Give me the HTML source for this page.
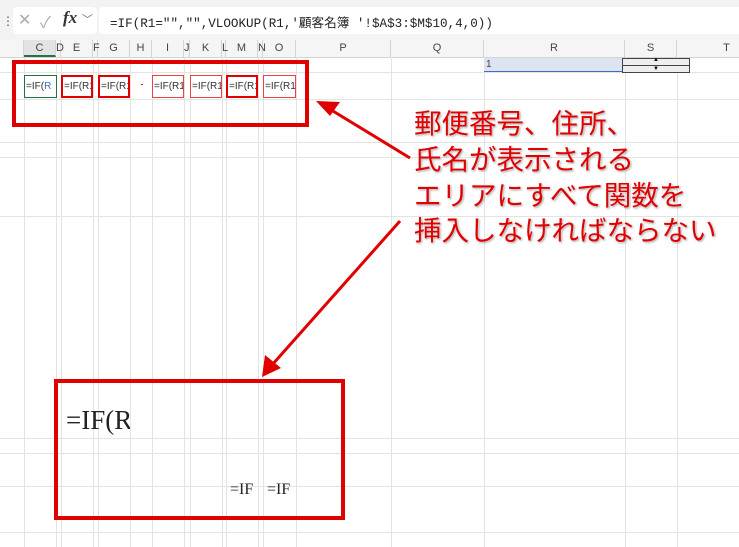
<!DOCTYPE html><html><head><style>
body{margin:0;width:739px;height:547px;overflow:hidden;background:#fff;font-family:"Liberation Sans","Noto Sans CJK JP",sans-serif;position:relative}
.a{position:absolute}
.vl{position:absolute;top:57px;bottom:0;width:1px;background:#e3e3e3}
.hl{position:absolute;left:0;right:0;height:1px;background:#e3e3e3}
.hd{position:absolute;top:40px;height:17px;font-size:11px;color:#444;text-align:center;line-height:17px;border-right:1px solid #d4d4d4;box-sizing:border-box}
.c{position:absolute;top:75px;height:23px;border:2px solid #e00000;box-sizing:border-box;font-size:10px;color:#333;line-height:19px;overflow:hidden;white-space:nowrap;padding-left:1px;background:#fff}
.t{border:1px solid #f04040;line-height:21px}
.j{position:absolute;left:414px;font-size:27.5px;color:#e00000;font-family:"Noto Sans CJK JP",sans-serif;line-height:30px;text-shadow:0 0 2px #fff,1px 1px 2px #888;white-space:nowrap}
</style></head><body>
<div class="a" style="left:0;top:0;width:739px;height:40px;background:#f3f3f3"></div>
<div class="a" style="left:2px;top:14px;font-size:12px;color:#555">⋮</div>
<div class="a" style="left:13px;top:7px;width:84px;height:27px;background:#fff;border-radius:4px"></div>
<div class="a" style="left:18px;top:10px;font-size:16px;color:#aaa">✕</div>
<div class="a" style="left:40px;top:9px;font-size:16px;color:#aaa">✓</div>
<div class="a" style="left:63px;top:8px;font-size:17px;font-style:italic;font-family:'Liberation Serif',serif;font-weight:bold;color:#333">fx</div>
<div class="a" style="left:82px;top:11px;font-size:11px;color:#777">﹀</div>
<div class="a" style="left:99px;top:7px;width:640px;height:27px;background:#fff;border-radius:4px 0 0 4px"></div>
<div class="a" style="left:110px;top:12px;font-size:12.6px;font-family:'Liberation Mono','Noto Sans CJK JP',monospace;color:#222;white-space:nowrap">=IF(R1="","",VLOOKUP(R1,'顧客名簿 '!$A$3:$M$10,4,0))</div>
<div class="a" style="left:0;top:40px;width:739px;height:17px;background:#f5f5f5;border-bottom:1px solid #d4d4d4"></div>
<div class="hd" style="left:0;width:24px"></div>
<div class="hd" style="left:24px;width:32px;background:#e3e3e3;border-bottom:2px solid #217346">C</div>
<div class="hd" style="left:56px;width:5px">D</div>
<div class="hd" style="left:61px;width:32px">E</div>
<div class="hd" style="left:93px;width:5px">F</div>
<div class="hd" style="left:98px;width:32px">G</div>
<div class="hd" style="left:130px;width:22px">H</div>
<div class="hd" style="left:152px;width:32px">I</div>
<div class="hd" style="left:184px;width:6px">J</div>
<div class="hd" style="left:190px;width:32px">K</div>
<div class="hd" style="left:222px;width:4px">L</div>
<div class="hd" style="left:226px;width:32px">M</div>
<div class="hd" style="left:258px;width:5px">N</div>
<div class="hd" style="left:263px;width:33px">O</div>
<div class="hd" style="left:296px;width:95px">P</div>
<div class="hd" style="left:391px;width:93px">Q</div>
<div class="hd" style="left:484px;width:141px">R</div>
<div class="hd" style="left:625px;width:52px">S</div>
<div class="hd" style="left:677px;width:100px">T</div>
<div class="vl" style="left:24px"></div><div class="vl" style="left:56px"></div><div class="vl" style="left:61px"></div><div class="vl" style="left:93px"></div><div class="vl" style="left:98px"></div><div class="vl" style="left:130px"></div><div class="vl" style="left:152px"></div><div class="vl" style="left:184px"></div><div class="vl" style="left:190px"></div><div class="vl" style="left:222px"></div><div class="vl" style="left:226px"></div><div class="vl" style="left:258px"></div><div class="vl" style="left:263px"></div><div class="vl" style="left:296px"></div><div class="vl" style="left:391px"></div><div class="vl" style="left:484px"></div><div class="vl" style="left:625px"></div><div class="vl" style="left:677px"></div>
<div class="hl" style="top:72px"></div><div class="hl" style="top:99px"></div><div class="hl" style="top:142px"></div><div class="hl" style="top:157px"></div><div class="hl" style="top:216px"></div><div class="hl" style="top:438px"></div><div class="hl" style="top:453px"></div><div class="hl" style="top:486px"></div><div class="hl" style="top:532px"></div>
<div class="a" style="left:484px;top:58px;width:140px;height:14px;background:#dce4f2;border-bottom:1px solid #3a6fc8;font-size:10px;color:#444;line-height:14px;padding-left:2px;box-sizing:border-box">1</div>
<div class="a" style="left:622px;top:58px;width:68px;height:15px;border:1px solid #444;box-sizing:border-box;background:#eee"><div style="border-top:1px solid #444;margin-top:6px"></div><div class="a" style="left:30px;top:-2px;font-size:6px">▲</div><div class="a" style="left:30px;top:7px;font-size:6px">▼</div></div>
<div class="a" style="left:12px;top:60px;width:297px;height:67px;border:4px solid #e00000;box-sizing:border-box"></div>
<div class="c" style="left:24px;width:33px;border:1px solid #217346;line-height:21px">=IF(<span style="color:#3a6fc8">R</span></div>
<div class="c" style="left:61px;width:32px">=IF(R1</div>
<div class="c" style="left:98px;width:32px">=IF(R1</div>
<div class="a" style="left:141px;top:84px;width:2px;height:1px;background:#e00000"></div>
<div class="c t" style="left:152px;width:32px">=IF(R1</div>
<div class="c t" style="left:190px;width:32px">=IF(R1</div>
<div class="c" style="left:226px;width:32px">=IF(R1</div>
<div class="c t" style="left:263px;width:33px">=IF(R1</div>
<div class="a" style="left:54px;top:379px;width:291px;height:141px;border:4px solid #e00000;box-sizing:border-box;background:transparent"></div>
<div class="a" style="left:66px;top:405px;font-size:27px;font-family:'Liberation Serif',serif;color:#222;width:64px;overflow:hidden;white-space:nowrap">=IF(R</div>
<div class="a" style="left:230px;top:481px;font-size:16px;font-family:'Liberation Serif',serif;color:#222">=IF</div>
<div class="a" style="left:267px;top:481px;font-size:16px;font-family:'Liberation Serif',serif;color:#222;width:28px;overflow:hidden">=IF</div>
<svg class="a" style="left:0;top:0" width="739" height="547">
<line x1="410" y1="158" x2="328" y2="108" stroke="#e00000" stroke-width="3"/>
<polygon points="316,101 340,102 330,116" fill="#e00000"/>
<line x1="400" y1="221" x2="272" y2="365" stroke="#e00000" stroke-width="3"/>
<polygon points="262,377 265,355 281,368" fill="#e00000"/>
</svg>
<div class="j" style="top:106px">郵便番号、住所、</div>
<div class="j" style="top:142px">氏名が表示される</div>
<div class="j" style="top:178px">エリアにすべて関数を</div>
<div class="j" style="top:213px">挿入しなければならない</div>
</body></html>
